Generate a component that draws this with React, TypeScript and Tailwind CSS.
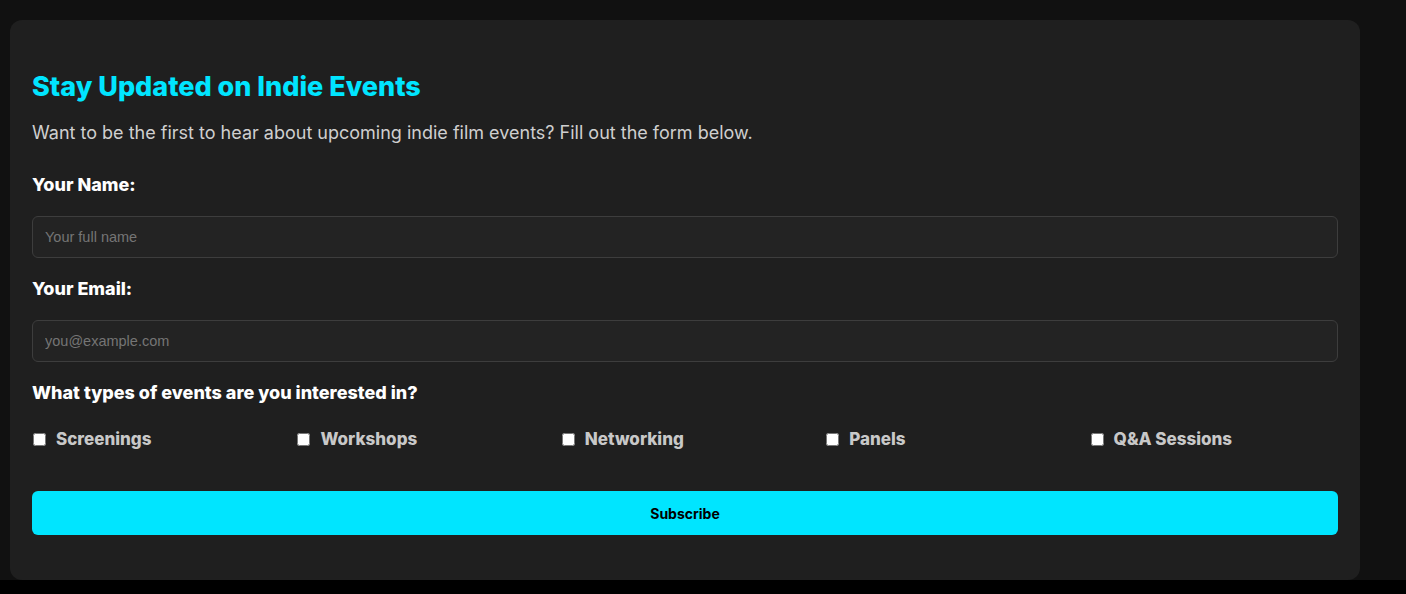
import React from "react";

const events = ["Screenings", "Workshops", "Networking", "Panels", "Q&A Sessions"];

export default function App() {
  return (
    <div className="min-h-screen bg-black" style={{ fontFamily: "Inter, 'Noto Sans', sans-serif" }}>
      <div className="h-[580px] bg-[#111111] pt-5 pl-2.5">
        <div className="w-[1350px] h-[560px] rounded-xl bg-[#1f1f1f] px-[22px] pt-[50px]">
          <h2 className="text-[27px] leading-[34px] font-extrabold text-[#00e5ff]">Stay Updated on Indie Events</h2>
          <p className="mt-[16px] text-[18px] leading-[26px] text-[#cfcfcf]">
            Want to be the first to hear about upcoming indie film events? Fill out the form below.
          </p>
          <form className="mt-[26px]" onSubmit={(e) => e.preventDefault()}>
            <label className="block text-[18px] leading-[26px] font-extrabold text-white">Your Name:</label>
            <input
              type="text"
              placeholder="Your full name"
              className="mt-[18px] block w-full h-[42px] rounded-md border border-[#3d3d3d] bg-[#232323] px-3 text-[14.5px] text-white placeholder:text-[#757575] outline-none"
              style={{ fontFamily: "'Liberation Sans', Arial, sans-serif" }}
            />
            <label className="mt-[18px] block text-[18px] leading-[26px] font-extrabold text-white">Your Email:</label>
            <input
              type="email"
              placeholder="you@example.com"
              className="mt-[18px] block w-full h-[42px] rounded-md border border-[#3d3d3d] bg-[#232323] px-3 text-[14.5px] text-white placeholder:text-[#757575] outline-none"
              style={{ fontFamily: "'Liberation Sans', Arial, sans-serif" }}
            />
            <div className="mt-[18px] text-[18px] leading-[26px] font-extrabold text-white">What types of events are you interested in?</div>
            <div className="mt-[21px] grid grid-cols-5 gap-4">
              {events.map((ev) => (
                <label key={ev} className="flex items-center text-[17px] leading-[24px] font-extrabold text-[#c8c8c8]">
                  <input type="checkbox" className="ml-[1px] mr-[10px] w-[13px] h-[13px]" />
                  {ev}
                </label>
              ))}
            </div>
            <button
              type="submit"
              className="mt-[40px] block w-full h-[44px] rounded-md bg-[#00e5ff] text-[14px] font-bold text-black"
            >
              Subscribe
            </button>
          </form>
        </div>
      </div>
    </div>
  );
}
